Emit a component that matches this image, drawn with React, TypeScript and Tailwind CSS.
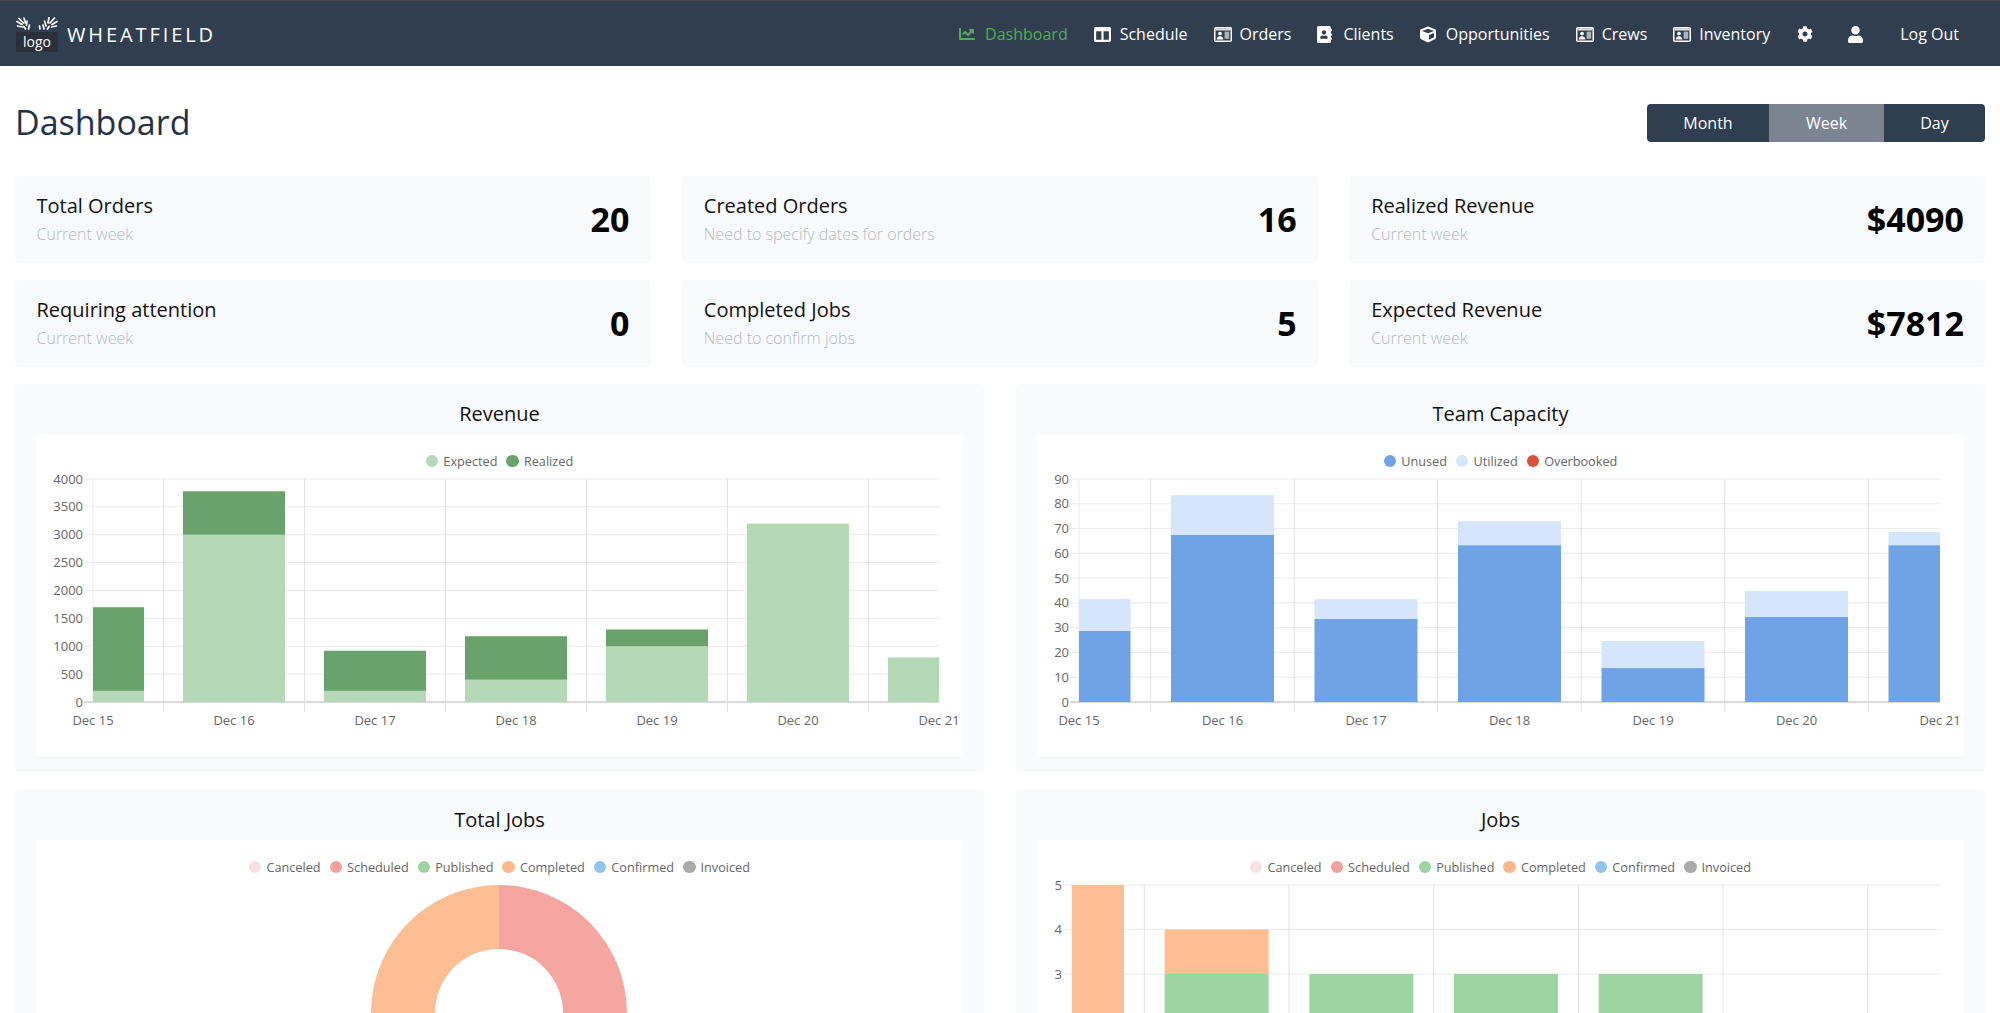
import { FaChartLine, FaColumns, FaAddressBook, FaCube, FaCog, FaUser } from "react-icons/fa";
import type { ReactNode } from "react";

const FONT = "font-['Open_Sans','Liberation_Sans',sans-serif]";

const IdCard = () => (
  <svg width="18" height="15" viewBox="0 0 18 15" className="block">
    <rect x="0.75" y="0.75" width="16.5" height="13.5" rx="1" fill="none" stroke="white" strokeWidth="1.5" />
    <rect x="1.5" y="1.5" width="15" height="2" fill="white" opacity="0.85" />
    <circle cx="6" cy="6.6" r="1.9" fill="white" />
    <path d="M2.6 12.5 C2.8 9.8 4.4 9.2 6 9.2 C7.6 9.2 9.2 9.8 9.4 12.5 Z" fill="white" />
    <rect x="10.6" y="4.6" width="4.6" height="7.2" fill="#aab2bb" />
  </svg>
);

const NAV: { label: string; icon: ReactNode; active?: boolean }[] = [
  { label: "Dashboard", icon: <FaChartLine className="h-[16px] w-[16px]" />, active: true },
  { label: "Schedule", icon: <FaColumns className="h-[17px] w-[17px]" /> },
  { label: "Orders", icon: <IdCard /> },
  { label: "Clients", icon: <FaAddressBook className="h-[17px] w-[15px]" /> },
  { label: "Opportunities", icon: <FaCube className="h-[17px] w-[16px]" /> },
  { label: "Crews", icon: <IdCard /> },
  { label: "Inventory", icon: <IdCard /> },
];

const CARDS = [
  ["Total Orders", "Current week", "20"],
  ["Created Orders", "Need to specify dates for orders", "16"],
  ["Realized Revenue", "Current week", "$4090"],
  ["Requiring attention", "Current week", "0"],
  ["Completed Jobs", "Need to confirm jobs", "5"],
  ["Expected Revenue", "Current week", "$7812"],
];

const DAYS = ["Dec 15", "Dec 16", "Dec 17", "Dec 18", "Dec 19", "Dec 20", "Dec 21"];

const GREEN_DARK = "#69a26b";
const GREEN_LIGHT = "#b5d9b7";
const BLUE = "#6fa3e5";
const BLUE_LIGHT = "#d5e6fc";
const ORANGE = "#fdbe94";
const GREEN = "#9dd4a2";
const PINK = "#f5a6a0";

const JOB_LEGEND: [string, string][] = [
  ["Canceled", "#f8e0e4"],
  ["Scheduled", "#f5a09a"],
  ["Published", "#9dd4a2"],
  ["Completed", "#fdb98a"],
  ["Confirmed", "#92c5ee"],
  ["Invoiced", "#aaaaaa"],
];

type Segment = [number, number, string];

type ChartProps = {
  left: number;
  right: number;
  max: number;
  step: number;
  unit: number;
  barWidth: number;
  minTick?: number;
  labels?: string[];
  bars: Segment[][];
};

// plot top sits at the same height in every chart
const TOP = 11;

const BarChart = ({ left, right, max, step, unit, barWidth, minTick = 0, labels, bars }: ChartProps) => {
  const cat = (right - left) / 6;
  const ticks: number[] = [];
  for (let v = max; v >= minTick; v -= step) ticks.push(v);
  const y = (v: number) => TOP + (max - v) * unit;
  const base = y(0);

  return (
    <svg width="100%" height={288} className="block overflow-hidden">
      <defs>
        <clipPath id={`plot-${left}-${max}`}>
          <rect x={left} y={0} width={right - left} height={600} />
        </clipPath>
      </defs>
      {ticks.map((t) => (
        <g key={t}>
          <line x1={left - 9} x2={right} y1={y(t)} y2={y(t)} stroke={t === 0 ? "#b4b4b4" : "#ebebeb"} />
          <text x={left - 10} y={y(t) + 4.5} textAnchor="end" fontSize={13} fill="#666">
            {t}
          </text>
        </g>
      ))}
      <line x1={left} x2={left} y1={TOP} y2={base} stroke="#ebebeb" />
      {[0, 1, 2, 3, 4, 5].map((i) => (
        <line
          key={i}
          x1={left + cat * (i + 0.5)}
          x2={left + cat * (i + 0.5)}
          y1={TOP}
          y2={base + 10}
          stroke="#e2e2e2"
        />
      ))}
      <g clipPath={`url(#plot-${left}-${max})`}>
        {bars.map((segs, i) =>
          segs.map(([from, to, color]) => (
            <rect
              key={`${i}-${from}`}
              x={left + cat * i - barWidth / 2}
              y={y(to)}
              width={barWidth}
              height={(to - from) * unit}
              fill={color}
            />
          ))
        )}
      </g>
      {labels?.map((d, i) => (
        <text key={d} x={left + cat * i} y={base + 22.5} textAnchor="middle" fontSize={13} fill="#666">
          {d}
        </text>
      ))}
    </svg>
  );
};

const Legend = ({ items }: { items: [string, string][] }) => (
  <div className="flex h-[14px] items-center justify-center gap-[9px] text-[12.7px] leading-[14px] text-[#666]">
    {items.map(([name, color]) => (
      <div key={name} className="flex items-center gap-[5px]">
        <span className="h-[12.5px] w-[12.5px] rounded-full" style={{ backgroundColor: color }} />
        {name}
      </div>
    ))}
  </div>
);

const Panel = ({ title, legend, children }: { title: string; legend: [string, string][]; children: ReactNode }) => (
  <div className="h-[388px] rounded-[4px] bg-[#f9fafc] px-[21px] pb-[16px]">
    <div className="flex h-[50px] items-center justify-center pt-[9px] text-[20px] text-[#111]">{title}</div>
    <div className="h-[322px] bg-white pt-[20px]">
      <Legend items={legend} />
      {children}
    </div>
  </div>
);

const Donut = () => (
  <svg width="100%" height={288} className="block">
    <path d="M463 11 A128 128 0 0 1 463 267 L463 203 A64 64 0 0 0 463 75 Z" fill={PINK} />
    <path d="M463 11 A128 128 0 0 0 463 267 L463 203 A64 64 0 0 1 463 75 Z" fill={ORANGE} />
  </svg>
);

const LogoMark = () => (
  <svg width="42" height="14" viewBox="0 0 42 14" className="block" stroke="white" strokeWidth="1.7" strokeLinecap="round">
    <path d="M1 4.5 L6 7.5 M3 1.5 L7.5 6 M8 1 L9.5 6 M1.5 9 L6.5 10 M11 4 L10.5 8.5 M13.5 8 L12.5 12 M8 9.5 L9.5 12" />
    <path d="M41 4.5 L36 7.5 M38.5 1 L34 6 M33 0.5 L32 6 M40.5 9 L35.5 10 M28.5 4 L30 9 M27 8 L28 12 M33 9.5 L31.5 12 M23.5 9 L24 12" />
  </svg>
);

const App = () => {
  return (
    <div className={`h-screen overflow-hidden bg-white ${FONT}`}>
      <nav className="flex h-[66px] items-center border-t border-[#45484d] bg-[#303e50] pt-[1px] pr-[41px] text-[16px] text-white">
        <div className="mt-[1px] ml-[16px] flex w-[42px] flex-col items-center">
          <LogoMark />
          <div className="mt-[1px] flex h-[20px] w-[42px] items-center justify-center rounded-[2px] bg-[#2a2f3a] text-[14px] leading-none">
            logo
          </div>
        </div>
        <div className="mt-[2px] ml-[9px] text-[20px] font-medium tracking-[2.9px]">WHEATFIELD</div>
        <div className="ml-auto flex items-center gap-[26px]">
          {NAV.map(({ label, icon, active }) => (
            <div key={label} className={`flex items-center ${active ? "text-[#4fae53]" : ""}`}>
              <span className="w-[26px]">{icon}</span>
              {label}
            </div>
          ))}
        </div>
        <FaCog className="ml-[27px] h-[16px] w-[16px]" />
        <FaUser className="ml-[35px] h-[17px] w-[15px]" />
        <div className="ml-[37px]">Log Out</div>
      </nav>

      <main className="px-[15px]">
        <div className="flex h-[110px] items-center justify-between pt-[3px]">
          <h1 className="text-[34px] text-[#233247]">Dashboard</h1>
          <div className="flex h-[38px] overflow-hidden rounded-[4px] text-[16px] text-white">
            <div className="flex w-[122px] items-center justify-center bg-[#2f3e50]">Month</div>
            <div className="flex w-[115px] items-center justify-center bg-[#7b8490]">Week</div>
            <div className="flex w-[101px] items-center justify-center bg-[#2f3e50]">Day</div>
          </div>
        </div>

        <div className="grid grid-cols-3 gap-x-[32px] gap-y-[17px]">
          {CARDS.map(([title, sub, value]) => (
            <div key={title} className="flex h-[87px] items-center justify-between rounded-[4px] bg-[#f9fafc] pr-[21px] pl-[21.5px]">
              <div className="pb-[3px]">
                <div className="text-[20px] leading-[27px] text-[#111]">{title}</div>
                <div className="mt-[4px] text-[16px] leading-[22px] font-light text-[#b6bbc0]">{sub}</div>
              </div>
              <div className="text-[34px] font-bold text-black">{value}</div>
            </div>
          ))}
        </div>

        <div className="mt-[17px] grid grid-cols-2 gap-x-[32px] gap-y-[18px]">
          <Panel title="Revenue" legend={[["Expected", GREEN_LIGHT], ["Realized", GREEN_DARK]]}>
            <BarChart
              left={57}
              right={903}
              max={4000}
              step={500}
              unit={223 / 4000}
              barWidth={102}
              labels={DAYS}
              bars={[
                [[0, 200, GREEN_LIGHT], [200, 1700, GREEN_DARK]],
                [[0, 3000, GREEN_LIGHT], [3000, 3780, GREEN_DARK]],
                [[0, 200, GREEN_LIGHT], [200, 920, GREEN_DARK]],
                [[0, 400, GREEN_LIGHT], [400, 1180, GREEN_DARK]],
                [[0, 1000, GREEN_LIGHT], [1000, 1300, GREEN_DARK]],
                [[0, 3200, GREEN_LIGHT]],
                [[0, 800, GREEN_LIGHT]],
              ]}
            />
          </Panel>
          <Panel title="Team Capacity" legend={[["Unused", BLUE], ["Utilized", BLUE_LIGHT], ["Overbooked", "#dd4f3d"]]}>
            <BarChart
              left={42}
              right={903}
              max={90}
              step={10}
              unit={223 / 90}
              barWidth={103}
              labels={DAYS}
              bars={[
                [[0, 28.7, BLUE], [28.7, 41.5, BLUE_LIGHT]],
                [[0, 67.4, BLUE], [67.4, 83.5, BLUE_LIGHT]],
                [[0, 33.5, BLUE], [33.5, 41.5, BLUE_LIGHT]],
                [[0, 63.3, BLUE], [63.3, 73, BLUE_LIGHT]],
                [[0, 13.7, BLUE], [13.7, 24.6, BLUE_LIGHT]],
                [[0, 34.3, BLUE], [34.3, 44.8, BLUE_LIGHT]],
                [[0, 63.3, BLUE], [63.3, 68.6, BLUE_LIGHT]],
              ]}
            />
          </Panel>
          <Panel title="Total Jobs" legend={JOB_LEGEND}>
            <Donut />
          </Panel>
          <Panel title="Jobs" legend={JOB_LEGEND}>
            <BarChart
              left={35}
              right={903}
              max={5}
              step={1}
              minTick={3}
              unit={44.5}
              barWidth={104}
              bars={[
                [[0, 5, ORANGE]],
                [[0, 3, GREEN], [3, 4, ORANGE]],
                [[0, 3, GREEN]],
                [[0, 3, GREEN]],
                [[0, 3, GREEN]],
              ]}
            />
          </Panel>
        </div>
      </main>
    </div>
  );
};

export default App;
